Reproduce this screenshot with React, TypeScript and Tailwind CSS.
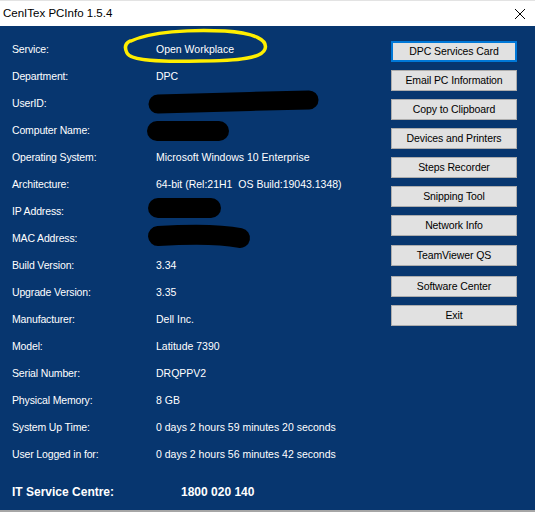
const rows: [string, string][] = [
  ["Service:", "Open Workplace"],
  ["Department:", "DPC"],
  ["UserID:", ""],
  ["Computer Name:", ""],
  ["Operating System:", "Microsoft Windows 10 Enterprise"],
  ["Architecture:", "64-bit (Rel:21H1  OS Build:19043.1348)"],
  ["IP Address:", ""],
  ["MAC Address:", ""],
  ["Build Version:", "3.34"],
  ["Upgrade Version:", "3.35"],
  ["Manufacturer:", "Dell Inc."],
  ["Model:", "Latitude 7390"],
  ["Serial Number:", "DRQPPV2"],
  ["Physical Memory:", "8 GB"],
  ["System Up Time:", "0 days 2 hours 59 minutes 20 seconds"],
  ["User Logged in for:", "0 days 2 hours 56 minutes 42 seconds"],
];

const buttons = [
  "DPC Services Card",
  "Email PC Information",
  "Copy to Clipboard",
  "Devices and Printers",
  "Steps Recorder",
  "Snipping Tool",
  "Network Info",
  "TeamViewer QS",
  "Software Center",
  "Exit",
];

export default function App() {
  return (
    <div className="relative w-[535px] h-[512px] flex flex-col bg-white font-['Liberation_Sans',Arial,sans-serif] overflow-hidden">
      {/* title bar */}
      <div className="h-[26px] flex items-center justify-between border-t border-[#e3e3e3] bg-white">
        <span className="pl-[3px] text-[11.5px] text-black">CenITex PCInfo 1.5.4</span>
        <svg width="12" height="12" viewBox="0 0 12 12" className="mr-[9px]">
          <path d="M1 1 L11 11 M11 1 L1 11" stroke="#000" strokeWidth="1" />
        </svg>
      </div>

      <div className="flex-1 flex bg-[#07366f]">
        <div className="flex-1 flex flex-col pl-[12px] pt-[10px] text-white text-[10.5px]">
          {rows.map(([label, value]) => (
            <div key={label} className="h-[27px] flex items-center">
              <span className="w-[144px] shrink-0 tracking-[-0.15px]">{label}</span>
              <span className="whitespace-pre">{value}</span>
            </div>
          ))}
          <div className="mt-[14px] h-[20px] flex items-center font-bold text-[12px]">
            <span className="w-[169px] shrink-0">IT Service Centre:</span>
            <span>1800 020 140</span>
          </div>
        </div>

        <div className="w-[126px] mr-[18px] pt-[15px] flex flex-col gap-[8px]">
          {buttons.map((b, i) => (
            <button
              key={b}
              className={
                "h-[21px] w-full flex items-center justify-center bg-[#e1e1e1] text-black text-[10.5px] tracking-[-0.1px] " +
                (i === 0 ? "border-2 border-[#0078d7]" : "border border-[#adadad]") +
                (i === 7 ? " mt-[1px]" : "") +
                (i === 8 ? " mt-[2px]" : "")
              }
            >
              {b}
            </button>
          ))}
        </div>
      </div>
      <div className="h-[2px] bg-[#a6a6a6]" />

      {/* markup drawn on the screenshot */}
      <svg className="absolute inset-0 pointer-events-none" width="535" height="512" viewBox="0 0 535 512">
        <path
          d="M131 41 C 150 32, 190 29, 225 31 C 255 33, 268 40, 265 49 C 262 58, 240 61, 200 61 C 160 62, 131 61, 127 53 C 124 47, 126 43, 130 41"
          fill="none"
          stroke="#ffee00"
          strokeWidth="3.5"
          strokeLinecap="round"
        />
        <g stroke="#000" strokeLinecap="round" fill="none">
          <path d="M158 104 C 200 103, 260 101, 309 100" strokeWidth="19" />
          <path d="M157 131 L219 131" strokeWidth="20" />
          <path d="M158 208 L211 208" strokeWidth="20" />
          <path d="M158 236 C 190 234, 220 234, 240 238" strokeWidth="20" />
        </g>
      </svg>
    </div>
  );
}
